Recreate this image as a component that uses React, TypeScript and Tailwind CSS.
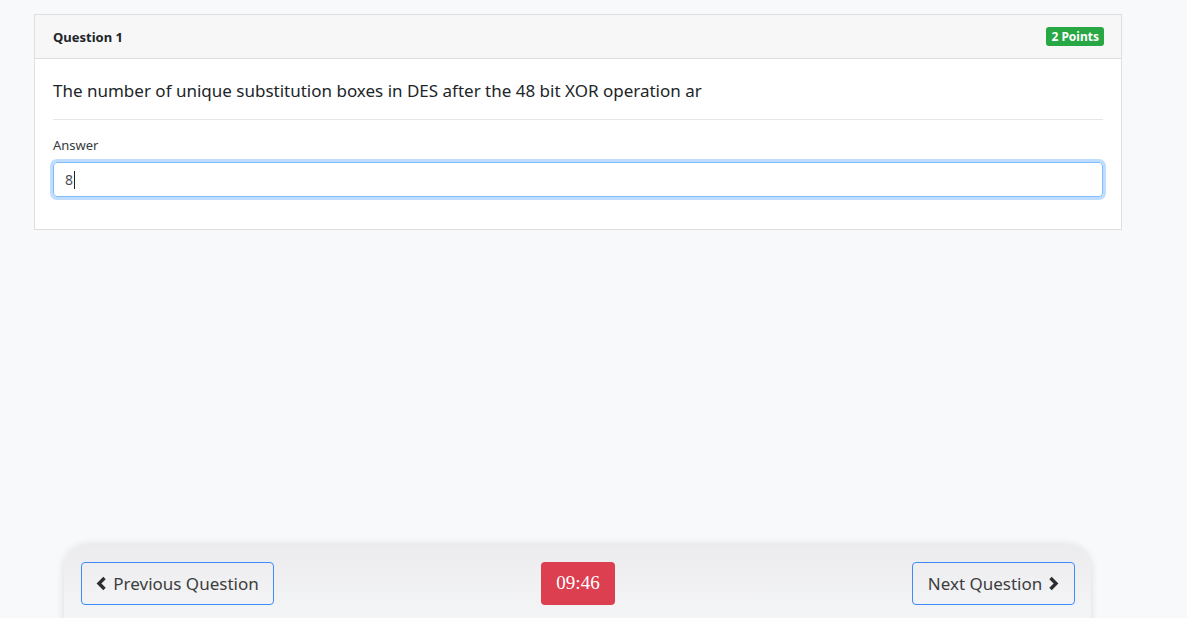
import React from "react";

function Chevron({ dir }: { dir: "left" | "right" }) {
  return (
    <svg width="11" height="15" viewBox="0 0 11 15" className="text-[#2d2d2d]">
      <polyline
        points={dir === "left" ? "8.5,2 3,7.5 8.5,13" : "2.5,2 8,7.5 2.5,13"}
        fill="none"
        stroke="currentColor"
        strokeWidth="3.4"
        strokeLinecap="butt"
        strokeLinejoin="miter"
      />
    </svg>
  );
}

export default function App() {
  return (
    <div
      className="w-[1187px] h-[618px] overflow-hidden bg-[#f8f9fa] relative"
      style={{ fontFamily: '"Noto Sans", "Open Sans", sans-serif' }}
    >
      <div className="pt-[14px] pl-[34px]">
        <div className="w-[1088px] bg-white border border-[#dfdfdf]">
          <div className="h-[44px] bg-[#f7f7f7] border-b border-[#dfdfdf] flex items-center justify-between pl-[18px] pr-[17px] pt-[2px]">
            <span className="text-[13px] font-bold text-[#212529]">Question 1</span>
            <span className="bg-[#28a745] text-white text-[12px] font-bold leading-[19px] h-[19px] px-[5px] rounded-[3px] -mt-[2px]">
              2 Points
            </span>
          </div>
          <div className="px-[18px] pt-[19px] pb-[32px]">
            <div className="text-[17px] leading-[26px] text-[#212529]">
              The number of unique substitution boxes in DES after the 48 bit XOR operation ar
            </div>
            <div className="mt-[15px] border-t border-[#e6e6e6]" />
            <div className="mt-[16px] text-[13px] leading-[19px] text-[#343a40]">Answer</div>
            <div className="mt-[7px] h-[35px] rounded-[4px] border border-[#80bdff] shadow-[0_0_0_3px_rgba(0,123,255,0.25)] flex items-center pl-[11px] text-[14px] text-[#495057]">
              <span>8</span>
              <span className="inline-block w-px h-[18px] bg-[#222] ml-[1px]" />
            </div>
          </div>
        </div>
      </div>

      <div className="absolute left-[64px] top-[545px] w-[1027px] h-[90px] rounded-t-[24px] bg-gradient-to-b from-[#ececee] to-[#f6f7f9] shadow-[0_0_8px_rgba(0,0,0,0.12)] flex items-start pl-[17px] pr-[16px] pt-[17px]">
        <button className="h-[43px] w-[193px] rounded-[4px] border border-[#3d8bfd] flex items-center justify-center gap-[6px] text-[17px] text-[#3d3d3d]">
          <Chevron dir="left" />
          <span>Previous Question</span>
        </button>
        <div
          className="ml-[267px] h-[43px] w-[74px] rounded-[4px] bg-[#dc3f50] text-white flex items-center justify-center text-[19px]"
          style={{ fontFamily: '"Liberation Serif", serif' }}
        >
          09:46
        </div>
        <button className="ml-auto h-[43px] w-[163px] rounded-[4px] border border-[#3d8bfd] flex items-center justify-center gap-[6px] text-[17px] text-[#3d3d3d]">
          <span>Next Question</span>
          <Chevron dir="right" />
        </button>
      </div>
    </div>
  );
}
